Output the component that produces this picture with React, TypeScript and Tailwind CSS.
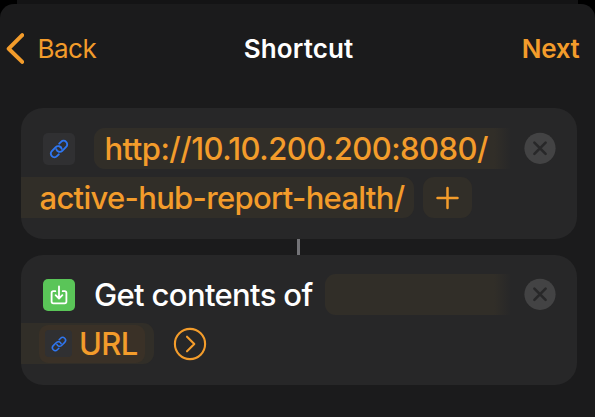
import React from "react";

function LinkGlyph({ className }: { className: string }) {
  return (
    <svg viewBox="-10 -10 20 20" className={className} fill="none" stroke="#2f76f0" strokeWidth="1.9" strokeLinecap="round" strokeLinejoin="round">
      <g transform="rotate(-45)">
        <path d="M-3.9 3.6H-6.5A3.6 3.6 0 0 1 -6.5 -3.6H-1A3.6 3.6 0 0 1 2.1 1.7" />
        <path d="M3.9 -3.6H6.5A3.6 3.6 0 0 1 6.5 3.6H1A3.6 3.6 0 0 1 -2.1 -1.7" />
      </g>
    </svg>
  );
}

function CloseButton() {
  return (
    <button aria-label="Remove" className="ml-auto mr-[21px] mt-[5px] h-8 w-8 shrink-0">
      <svg viewBox="0 0 32 32" className="h-8 w-8 overflow-visible">
        <circle cx="16" cy="15.3" r="15.6" fill="#434344" />
        <path d="M10.4 9.7l11.2 11.2M21.6 9.7L10.4 20.9" stroke="#282829" strokeWidth="2.6" strokeLinecap="round" />
      </svg>
    </button>
  );
}

export default function App() {
  return (
    <div className="h-[417px] w-[595px] overflow-hidden bg-black font-['Inter','Liberation_Sans',sans-serif]">
      <div className="mx-auto h-[4px] w-[561px] bg-[#141415]" />
      <main className="h-[413px] rounded-t-[14px] bg-[#1b1b1c]">
        <header className="flex h-[104px] items-start pt-[25px] text-[26px] leading-10 text-[#f39c2b]">
          <div className="flex w-[200px] items-start">
            <svg viewBox="0 0 18 32" className="ml-[6px] mt-[3px] h-8 w-[18px]" fill="none" stroke="currentColor" strokeWidth="4" strokeLinecap="round" strokeLinejoin="round">
              <path d="M16.2 3.2L2.7 16.7L16.2 29.9" />
            </svg>
            <span className="ml-[13.5px] tracking-[-0.5px]">Back</span>
          </div>
          <h1 className="w-[197px] text-center font-semibold tracking-[0.1px] text-white">Shortcut</h1>
          <span className="ml-auto mr-[15.5px] font-semibold tracking-[-0.3px]">Next</span>
        </header>

        <div className="ml-[20.5px] w-[556.5px] text-[31px] font-medium leading-[41px] text-[#f39c2b]">
          <section className="h-[131px] overflow-hidden rounded-[22px] bg-[#272728] pt-5">
            <div className="flex h-[41px] items-start">
              <div className="ml-[22.5px] mt-[5px] flex h-8 w-8 items-center justify-center rounded-[5px] bg-[#303032]">
                <LinkGlyph className="h-5 w-5" />
              </div>
              <div className="ml-[19px] h-[41px] w-[417px] whitespace-nowrap rounded-l-[11px] bg-linear-to-r from-[#312e28] from-[96%] to-[#272728] pl-[10.5px]">
                <span className="tracking-[-0.53px]">http://10.10.200.200:8080/</span>
              </div>
              <CloseButton />
            </div>
            <div className="mt-2 flex h-[41px]">
              <div className="w-[393px] whitespace-nowrap rounded-r-[11px] bg-[#312e28] pl-[19px]">
                <span className="tracking-[-0.7px]">active-hub-report-health/</span>
              </div>
              <button aria-label="Add" className="ml-[9.5px] flex w-[49px] items-center justify-center rounded-[11px] bg-[#312e28]">
                <svg viewBox="0 0 24 24" className="h-6 w-6" fill="none" stroke="currentColor" strokeWidth="2.5" strokeLinecap="round">
                  <path d="M11.5 2v20M1.5 12h20" />
                </svg>
              </button>
            </div>
          </section>

          <div className="ml-[276.5px] h-4 w-[3px] bg-[#737377]" />

          <section className="h-[130px] overflow-hidden rounded-[22px] bg-[#272728] pt-[19px]">
            <div className="flex h-[41px] items-start">
              <div className="ml-[22.5px] mt-[5px] flex h-8 w-8 items-center justify-center rounded-[5px] bg-[#5ac558]">
                <svg viewBox="0 0 32 32" className="h-8 w-8" fill="none" stroke="white" strokeWidth="1.8" strokeLinecap="round" strokeLinejoin="round">
                  <path d="M12.3 12.2H10.4Q8.6 12.2 8.6 14V22.6Q8.6 24.4 10.4 24.4H21.6Q23.4 24.4 23.4 22.6V14Q23.4 12.2 21.6 12.2H19.7M16 7.5V19.2M12.6 16.2L16 19.5L19.4 16.2" />
                </svg>
              </div>
              <span className="ml-[19px] w-[230.5px] whitespace-nowrap tracking-[-0.65px] text-white">Get contents of</span>
              <div className="h-[41px] w-[186px] rounded-l-[11px] bg-linear-to-r from-[#312e28] from-[91%] to-[#272728]" />
              <CloseButton />
            </div>
            <div className="mt-2 flex h-[41px] items-center">
              <div className="flex h-[41px] w-[133.5px] items-center rounded-r-[11px] bg-[#312e28] pl-[18.5px]">
                <div className="flex h-[38px] w-[105.5px] items-center rounded-[9px] bg-[#3a3127] pl-[6px] leading-[38px]">
                  <div className="flex h-[27px] w-[27px] items-center justify-center rounded-[4px] bg-[#303032]">
                    <LinkGlyph className="h-4 w-4" />
                  </div>
                  <span className="ml-[7px] tracking-[-0.6px]">URL</span>
                </div>
              </div>
              <svg viewBox="0 0 34 34" className="ml-[19px] h-[34px] w-[34px]" fill="none" stroke="currentColor" strokeWidth="2.1" strokeLinecap="round" strokeLinejoin="round">
                <circle cx="17" cy="17" r="15.1" />
                <path d="M14 9.7L21.3 17L14 24.3" />
              </svg>
            </div>
          </section>
        </div>
      </main>
    </div>
  );
}
